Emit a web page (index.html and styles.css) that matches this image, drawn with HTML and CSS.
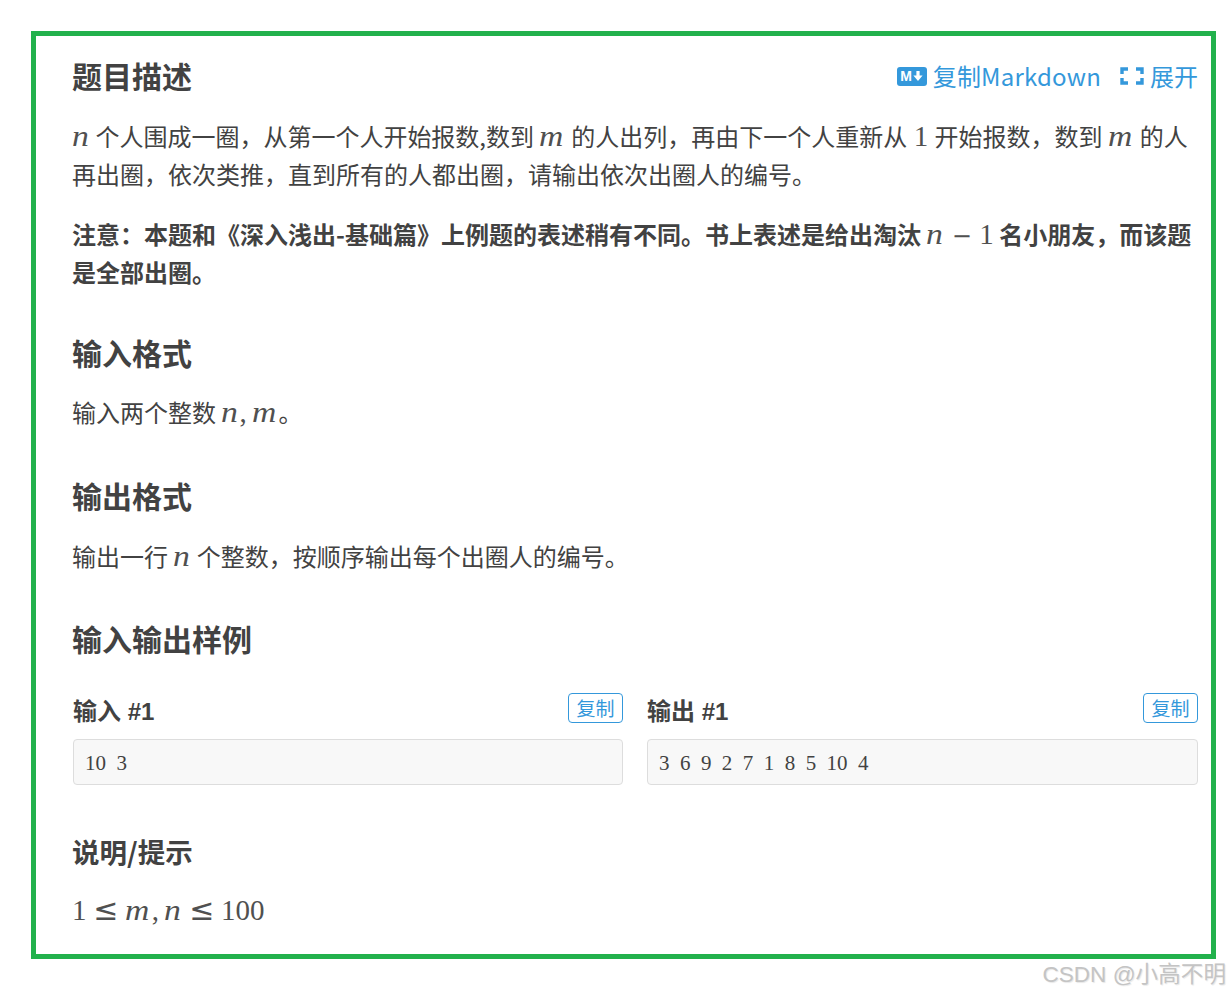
FILE: index.html
```html
<!DOCTYPE html>
<html lang="zh-CN">
<head>
<meta charset="utf-8">
<title>题目描述</title>
<link rel="stylesheet" href="styles.css">
</head>
<body>
<main class="card">
  <header class="title-row">
    <h2 class="heading">题目描述</h2>
    <div class="tools">
      <a class="tool">
        <span class="md-badge"><span class="md-m">M</span><svg class="md-arrow" viewBox="0 0 10 10"><path d="M3.4 0h3.2v4.6H9.6L5 10 .4 4.6h3z" fill="#fff"/></svg></span>
        <span class="tool-label">复制Markdown</span>
      </a>
      <a class="tool">
        <svg class="expand-icon" viewBox="0 0 24 18"><path d="M8 2H2v5M16 2h6v5M2 11v5h6M22 11v5h-6" fill="none" stroke="#3498db" stroke-width="3.4"/></svg>
        <span>展开</span>
      </a>
    </div>
  </header>
  <p class="text lead"><i class="math n">n</i> 个人围成一圈，从第一个人开始报数,数到 <i class="math m">m</i> 的人出列，再由下一个人重新从 <span class="num digit">1</span> 开始报数，数到 <i class="math m">m</i> 的人再出圈，依次类推，直到所有的人都出圈，请输出依次出圈人的编号。</p>
  <p class="text note"><strong>注意：本题和《深入浅出-基础篇》上例题的表述稍有不同。书上表述是给出淘汰 <i class="math n">n</i> <span class="rel minus">−</span> <span class="num">1</span> 名小朋友，而该题是全部出圈。</strong></p>
  <h2 class="heading sect-input">输入格式</h2>
  <p class="text body-input">输入两个整数 <i class="math n">n</i><span class="num">,</span> <i class="math m">m</i>。</p>
  <h2 class="heading sect-output">输出格式</h2>
  <p class="text body-output">输出一行 <i class="math n">n</i> 个整数，按顺序输出每个出圈人的编号。</p>
  <h2 class="heading sect-sample">输入输出样例</h2>
  <section class="samples">
    <div class="sample">
      <div class="sample-head"><h3 class="sample-title">输入 #1</h3><button class="copy">复制</button></div>
      <pre class="code">10 3</pre>
    </div>
    <div class="sample">
      <div class="sample-head"><h3 class="sample-title">输出 #1</h3><button class="copy">复制</button></div>
      <pre class="code">3 6 9 2 7 1 8 5 10 4</pre>
    </div>
  </section>
  <h3 class="hint-title">说明/提示</h3>
  <p class="formula"><span class="num">1</span> <span class="rel leq">≤</span> <i class="math m">m</i><span class="num">,</span> <i class="math n">n</i> <span class="rel leq">≤</span> <span class="num">100</span></p>
</main>
<div class="watermark">CSDN @小高不明</div>
</body>
</html>
```
FILE: styles.css
```css
* { box-sizing: border-box; }
html, body { margin: 0; height: 995px; overflow: hidden; background: #fff; }
body {
  position: relative;
  padding: 31px;
  font-family: "Noto Sans CJK SC", "Liberation Sans", sans-serif;
  color: #424242;
  font-size: 24px;
}
.card {
  width: 1185px;
  height: 928px;
  border: 5px solid #22b14c;
  padding: 16px 13px 0 36px;
  background: #fff;
}
.title-row { display: flex; justify-content: space-between; align-items: center; }
.heading { margin: 0; font-size: 30px; line-height: 44px; font-weight: 700; }
.sect-input { margin-top: 39px; }
.sect-output { margin-top: 42px; }
.sect-sample { margin-top: 41px; }
.tools { display: flex; align-items: center; gap: 6px; padding-top: 2px; color: #3498db; font-size: 24px; line-height: 44px; }
.tool { display: flex; align-items: center; gap: 6px; margin-left: 13px; }
.tool-label { letter-spacing: .2px; }
.md-badge {
  display: flex; align-items: center; justify-content: center; gap: 1px;
  width: 30px; height: 19px; background: #3498db; border-radius: 3px;
}
.md-m { color: #fff; font: 700 14px/18px "Liberation Sans", sans-serif; }
.md-arrow { width: 10px; height: 10px; }
.expand-icon { width: 24px; height: 18px; }
.text { margin: 0; line-height: 38px; }
.lead { margin-top: 19px; }
.note { margin-top: 22px; }
.body-input { margin-top: 19px; }
.body-output { margin-top: 20px; }
.math {
  display: inline-block;
  line-height: 0;
  color: #505050;
  font-family: "Liberation Serif", serif; font-size: 29px; font-style: italic; font-weight: 400;
  transform: scaleX(1.16); transform-origin: left center;
}
.math.n { width: 18px; }
.math.m { width: 26.5px; }
.num { font-family: "Liberation Serif", serif; font-size: 29px; font-weight: 400; line-height: 0; color: #505050; }
.digit { margin: 0 1px; }
.rel { font-family: "DejaVu Sans", sans-serif; font-weight: 400; line-height: 0; color: #505050; }
.minus { font-size: 24px; margin: 0 2px; }
.leq { font-size: 30px; margin: 0 1.4px; }
.samples { display: grid; grid-template-columns: 550px 551px; gap: 24px; margin-top: 33px; margin-left: 1px; }
.sample-head { display: flex; justify-content: space-between; align-items: flex-start; height: 46px; }
.sample-title { margin: 1px 0 0; font-family: "Liberation Sans", "Noto Sans CJK SC", sans-serif; font-size: 24px; line-height: 36px; font-weight: 700; }
.copy {
  width: 55px; height: 30px; padding: 0;
  border: 1px solid #3498db; border-radius: 4px; background: #fff;
  color: #3498db; font: 19px/26px "Noto Sans CJK SC", sans-serif;
}
.code {
  margin: 0; height: 46px; padding: 1px 11px 0;
  background: #f8f8f8; border: 1px solid #ddd; border-radius: 4px;
  font: 21px/44px "Liberation Serif", serif;
  word-spacing: 5.2px; color: #424242;
}
.hint-title { margin: 47px 0 0; font-size: 27.5px; line-height: 38px; font-weight: 700; }
.formula { margin: 21px 0 0; line-height: 38px; }
.watermark {
  position: absolute; right: 3px; top: 960px;
  font: 22.6px/30px "Liberation Sans", "Noto Sans CJK SC", sans-serif;
  color: #c4c4c4; text-shadow: 1px 1px 1px #e8e8e8;
}
```
